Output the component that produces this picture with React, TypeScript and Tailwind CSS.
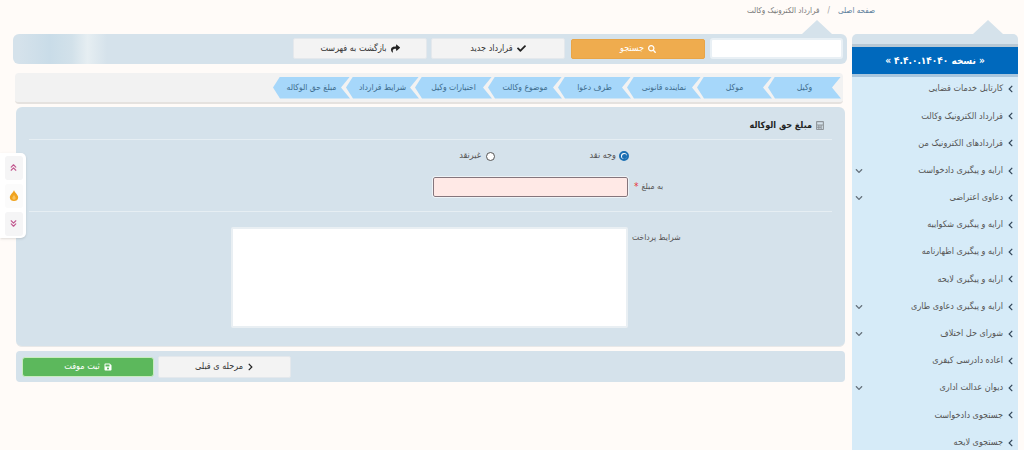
import React from 'react';
import { FaCalculator, FaCheck, FaChevronDown, FaChevronLeft, FaChevronRight, FaSave, FaSearch, FaShare } from 'react-icons/fa';
import { ChevronsDown, ChevronsUp } from 'lucide-react';

const MENU = [
  { title: 'کارتابل خدمات قضایی' },
  { title: 'قرارداد الکترونیک وکالت' },
  { title: 'قراردادهای الکترونیک من' },
  { title: 'ارایه و پیگیری دادخواست', sub: true },
  { title: 'دعاوی اعتراضی', sub: true },
  { title: 'ارایه و پیگیری شکواییه' },
  { title: 'ارایه و پیگیری اظهارنامه' },
  { title: 'ارایه و پیگیری لایحه' },
  { title: 'ارایه و پیگیری دعاوی طاری', sub: true },
  { title: 'شورای حل اختلاف', sub: true },
  { title: 'اعاده دادرسی کیفری' },
  { title: 'دیوان عدالت اداری', sub: true },
  { title: 'جستجوی دادخواست' },
  { title: 'جستجوی لایحه' },
];

const TABS = [
  { title: 'وکیل', width: 'w-[73px]' },
  { title: 'موکل', width: 'w-[75px]' },
  { title: 'نماینده قانونی', width: 'w-[74px]' },
  { title: 'طرف دعوا', width: 'w-[73px]' },
  { title: 'موضوع وکالت', width: 'w-[74px]' },
  { title: 'اختیارات وکیل', width: 'w-[77px]' },
  { title: 'شرایط قرارداد', width: 'w-[73px]' },
  { title: 'مبلغ حق الوکاله', width: 'w-[77px]' },
];

const Caret = ({ cls }: { cls: string }) => (
  <span className={`${cls} absolute -top-[14px] w-0 h-0 border-x-[15px] border-x-transparent border-b-[14px] border-b-[#d5e2eb]`} />
);

const GrayButton = ({ icon, label, cls }: { icon: React.ReactNode; label: string; cls: string }) => (
  <button className={`${cls} flex items-center justify-center gap-1 rounded-[2px] bg-[#f3f3f3] border border-[#e4e8ec] text-[#333] text-[9px]`}>
    <span>{label}</span>
    {icon}
  </button>
);

const App: React.FC = () => {
  return (
    <div className="w-[1024px] h-[450px] overflow-hidden relative bg-[#fffbf8] text-[#555] font-['DejaVu_Sans_Condensed','DejaVu_Sans',sans-serif]">
      {/* breadcrumb */}
      <div className="h-[34px] pr-[149px] pb-[12px] flex items-center justify-end gap-2 text-[8px]">
        <span className="text-[#777]">قرارداد الکترونیک وکالت</span>
        <span className="text-[#999]">/</span>
        <span className="text-[#5c7f9c]">صفحه اصلی</span>
      </div>

      <div className="flex items-start">
        {/* main column */}
        <div className="w-[834px] ml-[13px]">
          {/* search bar */}
          <div className="relative h-[30px] rounded-[6px] bg-[#d5e2eb] flex items-center justify-end pr-[4px] pb-[1px]">
            <Caret cls="right-[15px]" />
            <div className="absolute left-[6px] top-0 bottom-0 w-[88px] bg-[linear-gradient(90deg,#d5e2eb_0%,#c9dce8_35%,#d2e1ea_60%,#e6eef2_78%,#d5e2eb_100%)]" />
            <GrayButton cls="w-[134px] h-[21px]" label="بازگشت به فهرست" icon={<FaShare className="w-[9px] h-[9px] text-[#222]" />} />
            <GrayButton cls="w-[134px] h-[21px] ml-[4px]" label="قرارداد جدید" icon={<FaCheck className="w-[9px] h-[9px] text-[#222]" />} />
            <button className="w-[134px] h-[20px] ml-[6px] flex items-center justify-center gap-1 rounded-[2px] bg-[#efac4e] border border-[#e8a548] text-white text-[9px]">
              <span>جستجو</span>
              <FaSearch className="w-[8px] h-[8px]" />
            </button>
            <div className="w-[133px] h-[21px] ml-[5px] rounded-[3px] bg-white border-2 border-[#e9f0f5]" />
          </div>

          {/* steps */}
          <div className="mt-[9px] ml-[2px] w-[828px] h-[31px] rounded-[4px] bg-[#f2f2f2] border-b-2 border-[#e5e2df] flex flex-row-reverse items-center pr-[2px]">
            {TABS.map((t, i) => (
              <div
                key={t.title}
                className={`${t.width} ${i > 0 ? '-mr-[4px]' : ''} h-[22px] shrink-0 bg-[#a6d7fa] flex items-center justify-center text-[#3d6c8d] text-[8.5px] [clip-path:polygon(0_50%,7px_0,100%_0,calc(100%-9px)_50%,100%_100%,7px_100%)]`}
              >
                {t.title}
              </div>
            ))}
          </div>

          {/* form */}
          <div className="mt-[3px] ml-[3px] w-[829px] h-[240px] rounded-[6px] bg-[#d5e2eb] border-b border-[#e8e8e8] px-[13px] flex flex-col">
            <div className="h-[33px] border-b border-[#e6eef3] flex items-start justify-end pt-[12px] pr-[8px] gap-1 text-[#222] text-[9px] font-bold">
              <span className="leading-[13px]">مبلغ حق الوکاله</span>
              <FaCalculator className="w-[8px] h-[9px] mt-[2px] text-[#8f959a]" />
            </div>

            <div className="mt-[9px] h-[14px] flex items-center text-[9px]">
              <label className="ml-[431px] w-[35px] flex items-center justify-end gap-[5px]">
                <span className="whitespace-nowrap">غیرنقد</span>
                <span className="w-[9px] h-[9px] shrink-0 rounded-full border border-[#555] bg-white" />
              </label>
              <label className="ml-[93px] w-[41px] flex items-center justify-end gap-[3px]">
                <span className="whitespace-nowrap">وجه نقد</span>
                <span className="w-[10px] h-[10px] shrink-0 rounded-full border-2 border-[#1b6fb3] bg-white flex items-center justify-center">
                  <span className="w-[5px] h-[5px] rounded-full bg-[#1b6fb3]" />
                </span>
              </label>
            </div>

            <div className="mt-[14px] h-[20px] flex items-center">
              <div className="ml-[404px] w-[195px] h-[20px] rounded-[2px] bg-[#ffe9e6] border border-[#85757c] outline outline-1 outline-[#eef3f6]" />
              <span className="ml-[6px] text-[#e5383b] text-[10px] leading-none">*</span>
              <span className="ml-[3px] text-[8.5px] whitespace-nowrap pb-[2px]">به مبلغ</span>
            </div>

            <div className="mt-[14px] border-b border-[#e6eef3]" />

            <div className="mt-[15px] flex items-start">
              <div className="ml-[202px] w-[397px] h-[101px] rounded-[2px] bg-white border-2 border-[#e9eff3]" />
              <span className="ml-[4px] mt-[4px] text-[8.5px] whitespace-nowrap">شرایط پرداخت</span>
            </div>
          </div>

          {/* footer */}
          <div className="mt-[4px] ml-[3px] w-[829px] h-[31px] rounded-[4px] bg-[#d5e2eb] flex items-center pl-[6px]">
            <button className="w-[132px] h-[20px] flex items-center justify-center gap-1 rounded-[3px] bg-[#5cb85c] border border-[#c9ecc0] text-white text-[9px]">
              <span>ثبت موقت</span>
              <FaSave className="w-[8px] h-[8px]" />
            </button>
            <GrayButton cls="w-[133px] h-[22px] ml-[4px]" label="مرحله ی قبلی" icon={<FaChevronRight className="w-[7px] h-[8px] text-[#222]" />} />
          </div>
        </div>

        {/* sidebar */}
        <div className="w-[166px] ml-[5px]">
          <div className="relative h-[13px] rounded-t-[5px] bg-[#d5e2eb] border-b-[3px] border-[#b8c8d4]">
            <Caret cls="left-[121px]" />
          </div>
          <div className="h-[27px] bg-[#0069bd] flex items-center justify-center pb-[1px] text-white text-[10px] font-bold">
            « نسخه ۴.۴.۰.۱۴۰۴۰ »
          </div>
          <div className="h-[3px] bg-[#a9c6dd]" />
          <div className="bg-[#d6ebf8]">
            {MENU.map(item => (
              <div key={item.title} className="h-[27.2px] flex items-center justify-between pl-[3px] pr-[4px] pb-[3px] text-[9px]">
                {item.sub ? <FaChevronDown className="w-[8px] h-[8px] text-[#66727c]" /> : <span />}
                <div className="flex items-center gap-[4px]">
                  <span className="whitespace-nowrap">{item.title}</span>
                  <FaChevronLeft className="w-[7px] h-[8px] text-[#33475a]" />
                </div>
              </div>
            ))}
          </div>
        </div>
      </div>

      {/* quick tools */}
      <div className="absolute left-0 top-[153px] w-[26px] h-[85px] rounded-r-[5px] bg-white shadow-sm flex flex-col items-center justify-center gap-[4px] pl-[1px]">
        <div className="w-[18px] h-[24px] rounded-[3px] bg-[#f5f5f6] flex items-center justify-center">
          <ChevronsUp className="w-[11px] h-[11px] text-[#c2588f]" strokeWidth={2.5} />
        </div>
        <div className="w-[18px] h-[24px] rounded-[3px] bg-[#fbfbfb] flex items-center justify-center">
          <svg viewBox="0 0 12 14" className="w-[10px] h-[13px]">
            <path d="M6 0.5C6.5 3.5 11 6 11 9.3C11 12 8.8 13.6 6 13.6C3.2 13.6 1 12 1 9.3C1 6 5.5 3.5 6 0.5Z" fill="#f0a31f" />
            <path d="M6 6C6.3 7.4 8 8.3 8 10C8 11.2 7.1 12 6 12C4.9 12 4 11.2 4 10C4 8.3 5.7 7.4 6 6Z" fill="#f9c25c" />
          </svg>
        </div>
        <div className="w-[18px] h-[24px] rounded-[3px] bg-[#f5f5f6] flex items-center justify-center">
          <ChevronsDown className="w-[11px] h-[11px] text-[#c2588f]" strokeWidth={2.5} />
        </div>
      </div>
    </div>
  );
};

export default App;
